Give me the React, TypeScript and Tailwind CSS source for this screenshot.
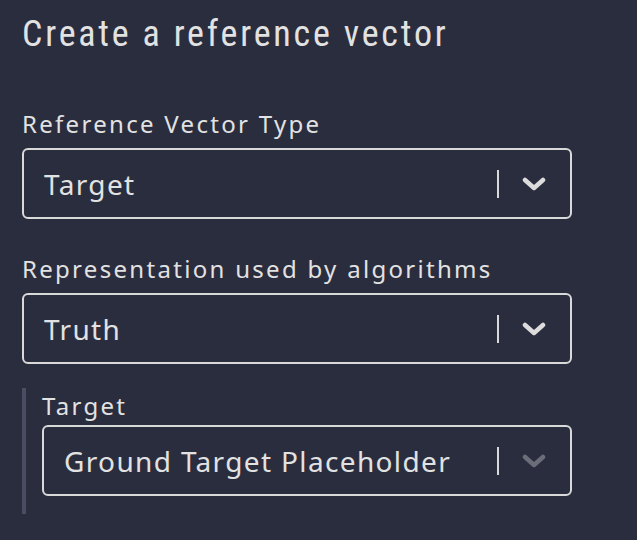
import React from 'react';

function Chevron({ dim }: { dim?: boolean }) {
  return (
    <svg width="24" height="14" viewBox="0 0 24 14" className={dim ? 'text-[#6b6d78]' : 'text-[#dcdcdc]'}>
      <polyline points="3,3 12,11 21,3" fill="none" stroke="currentColor" strokeWidth="4.5" strokeLinecap="round" strokeLinejoin="round" />
    </svg>
  );
}

function Select({ value, dim }: { value: string; dim?: boolean }) {
  return (
    <div className="flex h-[71px] items-center rounded-md border-2 border-[#d9d9d9] pl-5 pr-6">
      <span className="flex-1 text-[28px] tracking-[1.35px] text-[#e2e2e2]">{value}</span>
      <div className="h-[28px] w-[2px] bg-[#d9d9d9]" />
      <div className="ml-[23px] flex items-center">
        <Chevron dim={dim} />
      </div>
    </div>
  );
}

export default function App() {
  return (
    <div className="min-h-[540px] w-[637px] bg-[#2a2d3e] pl-[22px] pr-[65px] pt-[12px] font-['Noto_Sans','Open_Sans',sans-serif] text-[#e2e2e2]">
      <h1 className="font-['Roboto',sans-serif] text-[36px] leading-[44px] tracking-[2.8px] font-stretch-condensed">
        Create a reference vector
      </h1>

      <div className="mt-[52px]">
        <label className="block text-[24px] leading-[32px] tracking-[2.3px]">Reference Vector Type</label>
        <div className="mt-2">
          <Select value="Target" />
        </div>
      </div>

      <div className="mt-[34px]">
        <label className="block text-[24px] leading-[32px] tracking-[2.3px]">Representation used by algorithms</label>
        <div className="mt-2">
          <Select value="Truth" />
        </div>
      </div>

      <div className="mt-[24px] border-l-4 border-[#4b4e62] pb-[18px] pl-4">
        <label className="block pt-[2px] text-[24px] leading-[32px] tracking-[2.3px]">Target</label>
        <div className="mt-[3px]">
          <Select value="Ground Target Placeholder" dim />
        </div>
      </div>
    </div>
  );
}
